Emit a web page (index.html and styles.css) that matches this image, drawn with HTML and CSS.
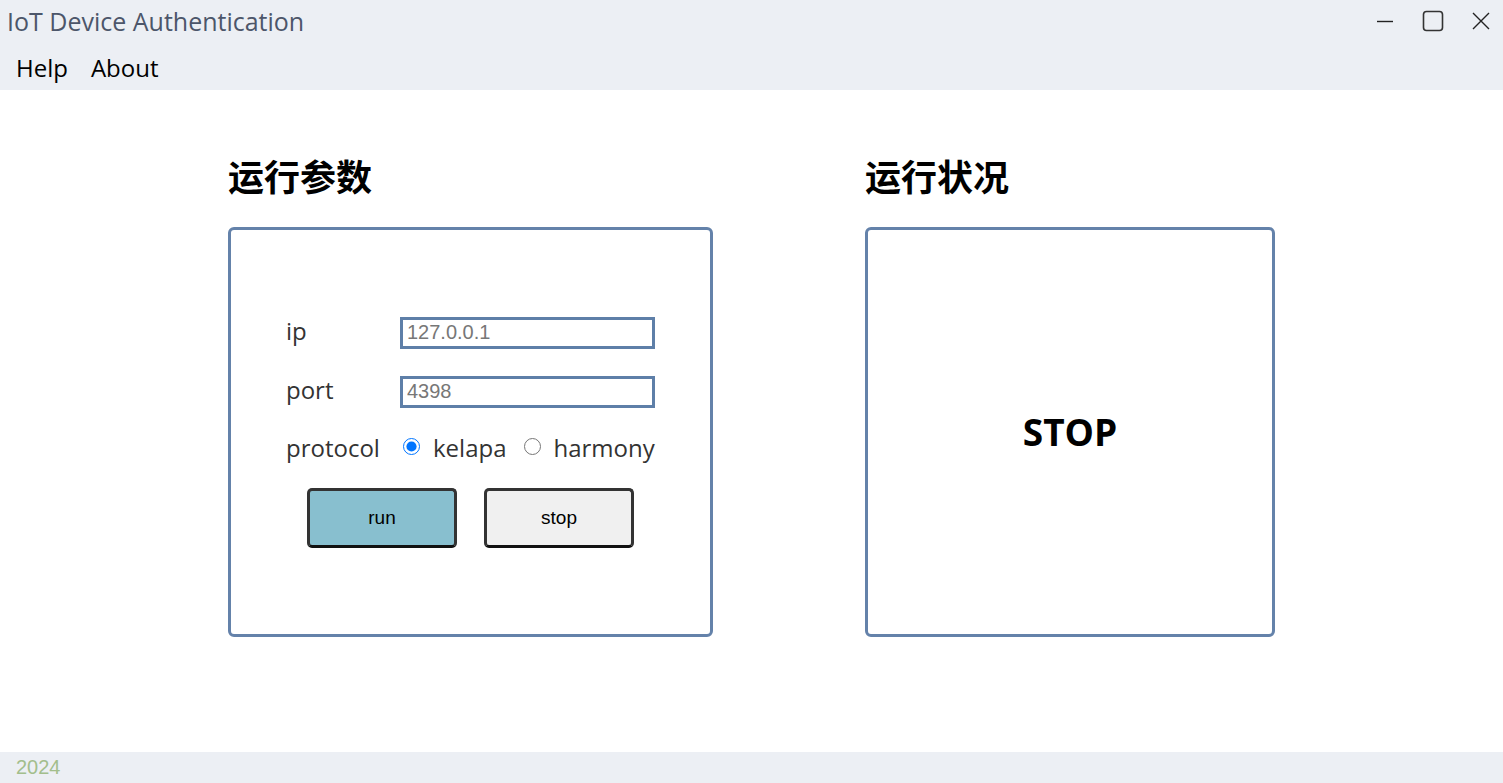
FILE: index.html
```html
<!DOCTYPE html>
<html lang="zh">
<head>
<meta charset="utf-8">
<title>IoT Device Authentication</title>
<link rel="stylesheet" href="styles.css">
</head>
<body>
<div class="app">
  <header class="titlebar">
    <div class="title">IoT Device Authentication</div>
    <div class="controls">
      <svg class="ctl" width="20" height="20" viewBox="0 0 20 20"><line x1="2" y1="10.5" x2="18" y2="10.5" stroke="#222" stroke-width="1.4"/></svg>
      <svg class="ctl" width="22" height="22" viewBox="0 0 22 22"><rect x="1.5" y="1.5" width="19" height="19" rx="3" fill="none" stroke="#333" stroke-width="1.6"/></svg>
      <svg class="ctl" width="20" height="20" viewBox="0 0 20 20"><path d="M2 2 L18 18 M18 2 L2 18" stroke="#222" stroke-width="1.4" fill="none"/></svg>
    </div>
  </header>
  <nav class="menubar">
    <span class="menu-item">Help</span>
    <span class="menu-item">About</span>
  </nav>
  <main class="main">
    <section class="col col-left">
      <h2 class="heading">运行参数</h2>
      <div class="panel panel-left">
        <form class="form">
          <div class="row">
            <label class="label label-field">ip</label>
            <input class="field" type="text" placeholder="127.0.0.1">
          </div>
          <div class="row row-port">
            <label class="label label-field">port</label>
            <input class="field" type="text" placeholder="4398">
          </div>
          <div class="row row-radio">
            <label class="label">protocol</label>
            <div class="radios">
              <label class="opt"><input class="radio" type="radio" name="proto" checked><span>kelapa</span></label>
              <label class="opt"><input class="radio" type="radio" name="proto"><span>harmony</span></label>
            </div>
          </div>
          <div class="buttons">
            <button type="button" class="btn btn-run">run</button>
            <button type="button" class="btn btn-stop">stop</button>
          </div>
        </form>
      </div>
    </section>
    <section class="col col-right">
      <h2 class="heading">运行状况</h2>
      <div class="panel panel-right">
        <div class="status">STOP</div>
      </div>
    </section>
  </main>
  <footer class="footer">2024</footer>
</div>
</body>
</html>
```
FILE: styles.css
```css
html, body {
  margin: 0;
  padding: 0;
  height: 100%;
}
body {
  font-family: "Open Sans", "Noto Sans", "Noto Sans CJK SC", sans-serif;
  background: #ffffff;
  color: #000;
}
.app {
  display: flex;
  flex-direction: column;
  height: 783px;
  overflow: hidden;
}
.titlebar {
  height: 45px;
  background: #eceff4;
  display: flex;
  align-items: center;
  justify-content: space-between;
}
.title {
  padding-left: 7px;
  font-size: 25px;
  color: #4c566a;
  line-height: 45px;
  margin-top: -2px;
}
.controls {
  display: flex;
  align-items: center;
  gap: 27px;
  padding-right: 12px;
  margin-top: -4px;
}
.menubar {
  height: 45px;
  background: #eceff4;
  display: flex;
  align-items: center;
  gap: 23px;
  padding-left: 16px;
}
.menu-item {
  font-size: 24px;
  color: #000;
  margin-top: -1px;
}
.main {
  flex: 1;
  display: flex;
  justify-content: center;
  gap: 152px;
  padding-top: 66px;
}
.heading {
  margin: 0 0 33px 0;
  font-family: "Noto Sans CJK SC", sans-serif;
  font-weight: 700;
  font-size: 36px;
  line-height: 38px;
}
.panel {
  box-sizing: border-box;
  height: 410px;
  border: 3px solid #6482aa;
  border-radius: 6px;
  display: flex;
  align-items: center;
  justify-content: center;
}
.panel-left { width: 485px; }
.panel-right { width: 410px; }
.form {
  display: flex;
  flex-direction: column;
  margin-top: 0;
}
.row {
  display: flex;
  align-items: center;
  height: 32px;
  margin-bottom: 27px;
}
.row-port {
  margin-bottom: 24px;
}
.row-radio {
  margin-bottom: 24px;
}
.label {
  width: 114px;
  font-size: 24px;
  color: #333;
}
.label-field {
  margin-top: -4px;
}
.field {
  box-sizing: border-box;
  width: 255px;
  height: 32px;
  border: 3px solid #5e7fa8;
  border-radius: 0;
  padding: 0 4px;
  font-family: "Liberation Sans", Arial, sans-serif;
  font-size: 20px;
  outline: none;
}
.field::placeholder { color: #777; }
.radios {
  display: flex;
  align-items: center;
  gap: 14px;
}
.opt {
  display: flex;
  align-items: center;
  font-size: 24px;
  color: #333;
}
.radio {
  width: 17px;
  height: 17px;
  margin: 0 13px 2px 3px;
  accent-color: #0075ff;
}
.buttons {
  display: flex;
  justify-content: center;
  gap: 27px;
  margin-left: 0;
}
.btn {
  box-sizing: border-box;
  width: 150px;
  height: 60px;
  border: 3px solid #333;
  border-bottom-color: #111;
  border-radius: 5px;
  font-family: "Liberation Sans", Arial, sans-serif;
  font-size: 19px;
  color: #000;
}
.btn-run { background: #88bfcf; }
.btn-stop { background: #f0f0f0; }
.status {
  font-family: "Open Sans", sans-serif;
  font-weight: 700;
  font-size: 37px;
  margin-top: -2px;
}
.footer {
  height: 31px;
  background: #eceff4;
  color: #a3be8c;
  font-family: "Liberation Sans", Arial, sans-serif;
  font-size: 20px;
  line-height: 31px;
  padding-left: 16px;
}
```
